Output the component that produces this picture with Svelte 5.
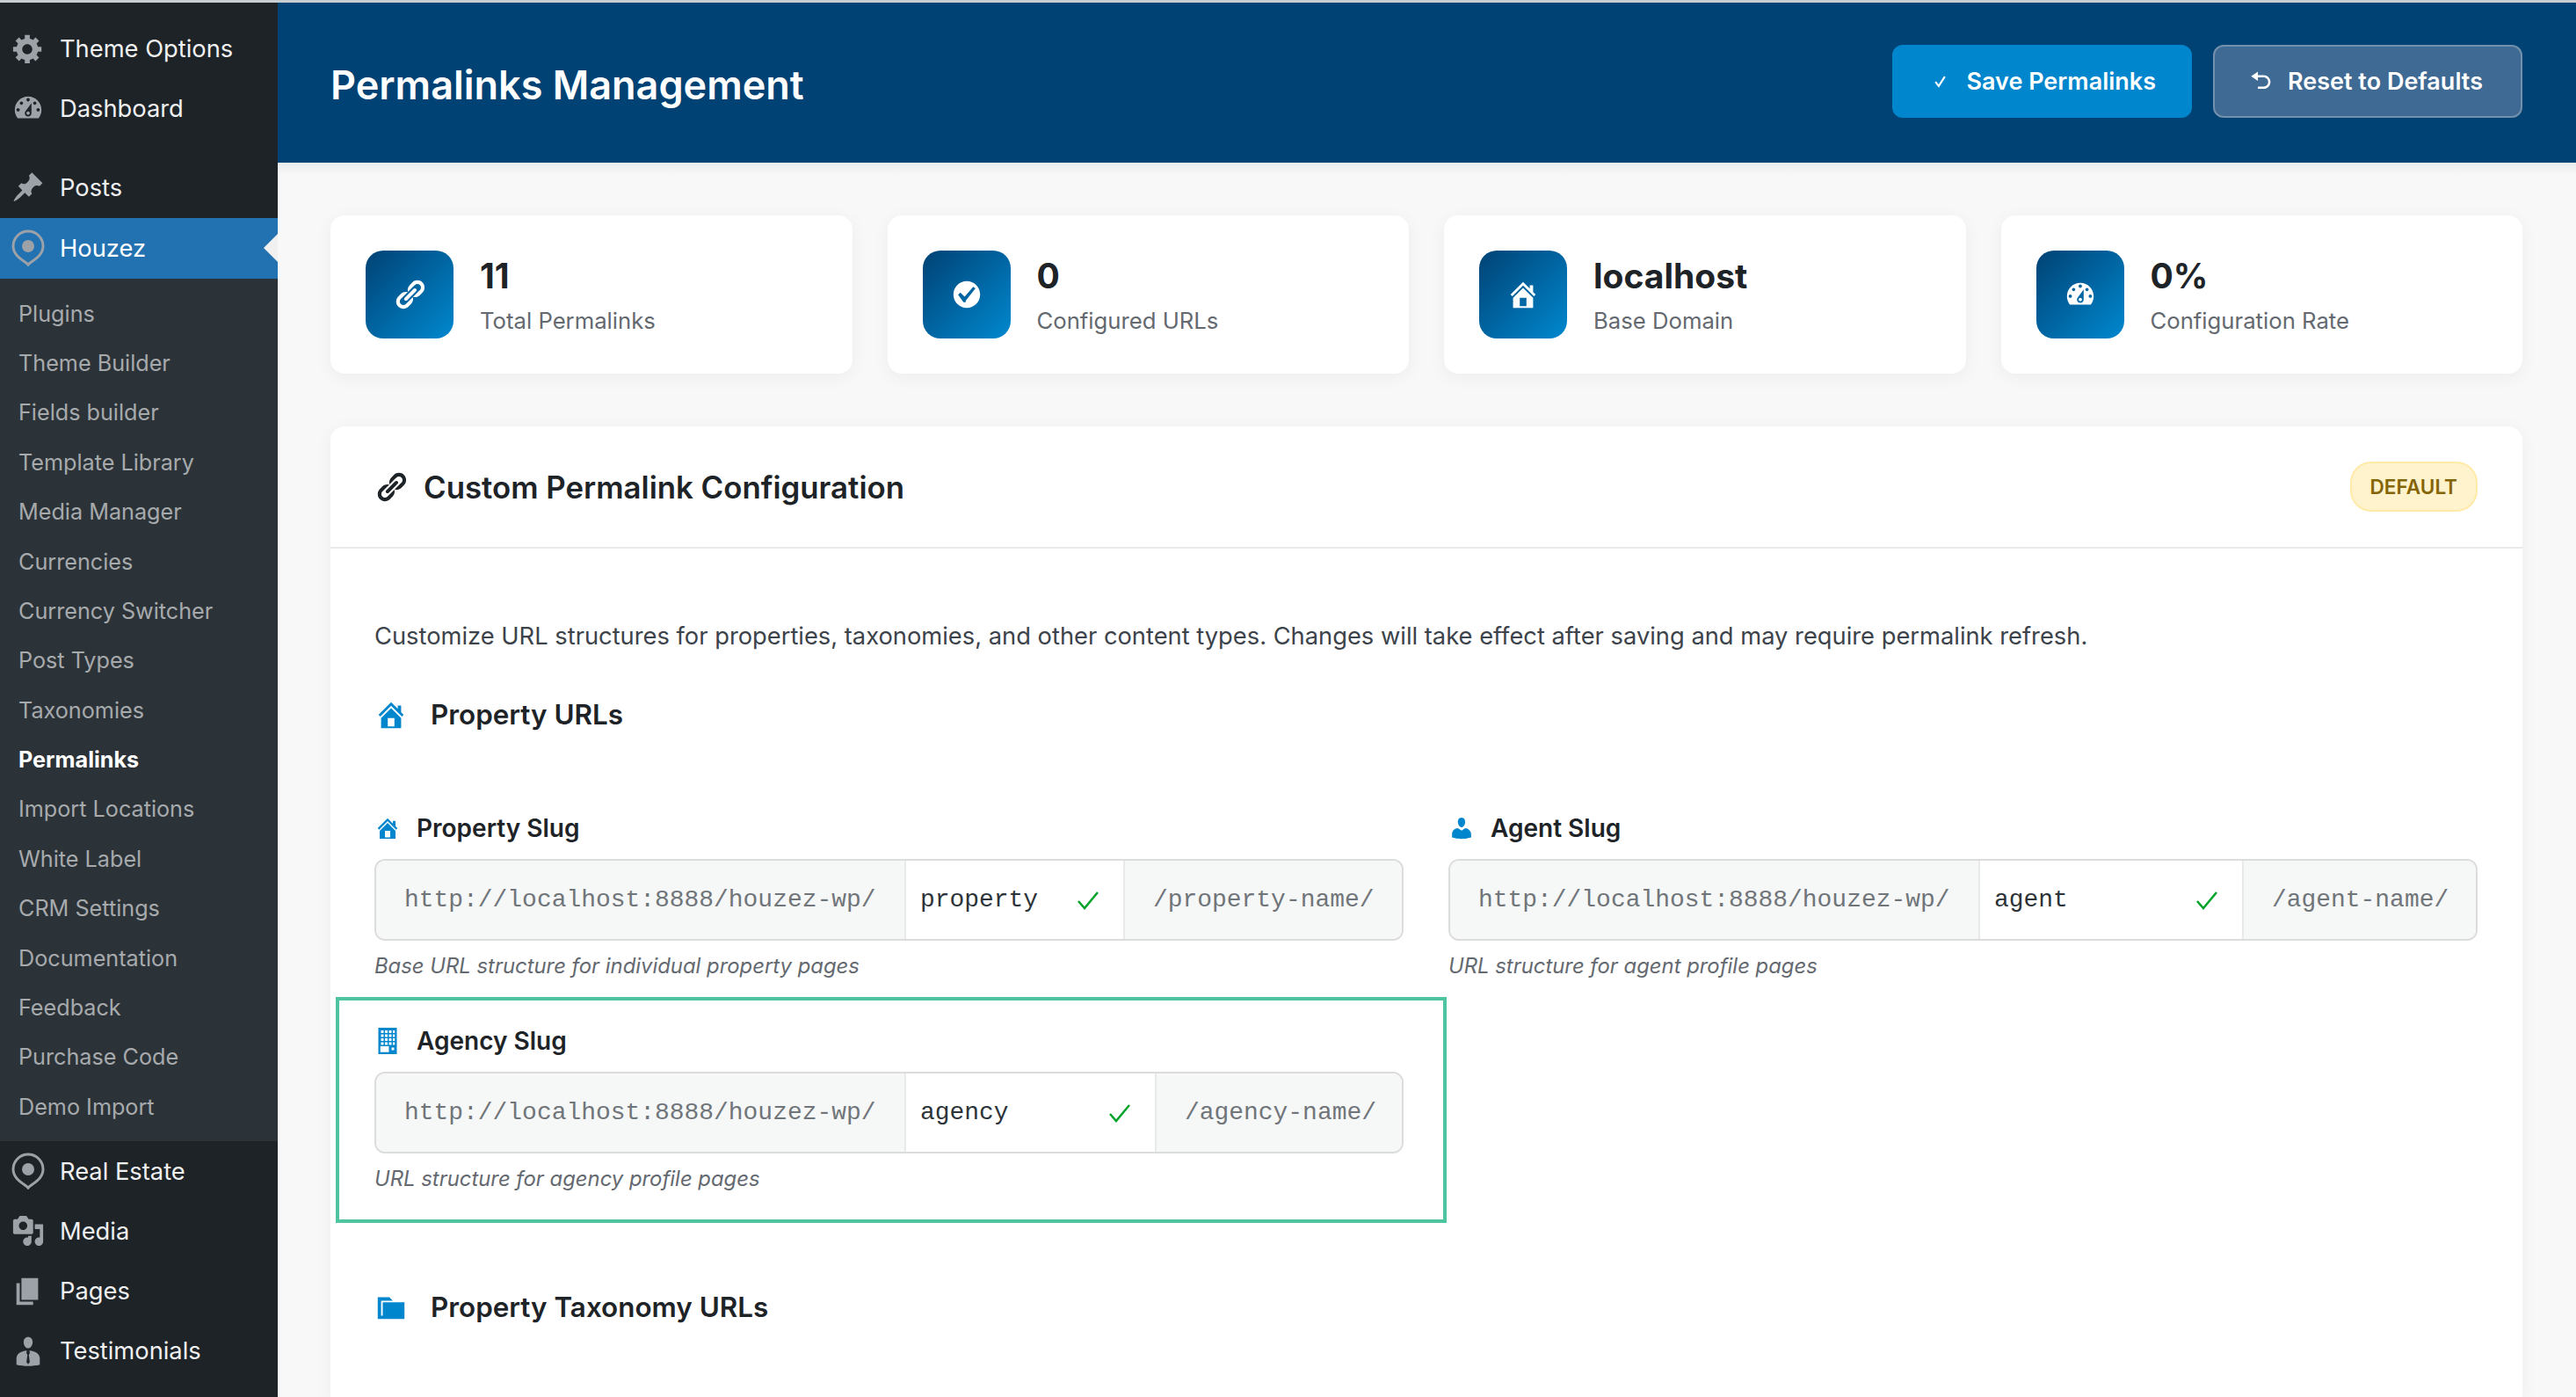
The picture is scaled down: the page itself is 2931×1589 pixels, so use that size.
<script>
	const topMenu = [
		{ label: 'Theme Options', icon: 'cog' },
		{ label: 'Dashboard', icon: 'gauge' }
	];
	const subMenu = [
		'Plugins',
		'Theme Builder',
		'Fields builder',
		'Template Library',
		'Media Manager',
		'Currencies',
		'Currency Switcher',
		'Post Types',
		'Taxonomies',
		'Permalinks',
		'Import Locations',
		'White Label',
		'CRM Settings',
		'Documentation',
		'Feedback',
		'Purchase Code',
		'Demo Import'
	];
	const lowerMenu = [
		{ label: 'Real Estate', icon: 'pin' },
		{ label: 'Media', icon: 'media' },
		{ label: 'Pages', icon: 'pages' },
		{ label: 'Testimonials', icon: 'tie' }
	];
	const stats = [
		{ value: '11', label: 'Total Permalinks', icon: 'link' },
		{ value: '0', label: 'Configured URLs', icon: 'yes' },
		{ value: 'localhost', label: 'Base Domain', icon: 'home' },
		{ value: '0%', label: 'Configuration Rate', icon: 'gauge' }
	];
	const fields = [
		{ label: 'Property Slug', icon: 'home', slug: 'property', suffix: '/property-name/', help: 'Base URL structure for individual property pages', inputWidth: 247 },
		{ label: 'Agent Slug', icon: 'user', slug: 'agent', suffix: '/agent-name/', help: 'URL structure for agent profile pages', inputWidth: 298 },
		{ label: 'Agency Slug', icon: 'building', slug: 'agency', suffix: '/agency-name/', help: 'URL structure for agency profile pages', inputWidth: 283, focused: true }
	];

	const paths = {
		cog: 'M18 12h-2.18c-.17.7-.44 1.35-.81 1.93l1.54 1.54-2.1 2.1-1.54-1.54c-.58.36-1.23.63-1.91.79V19H8v-2.18c-.68-.16-1.33-.43-1.91-.79l-1.54 1.54-2.12-2.12 1.54-1.54c-.36-.58-.63-1.23-.79-1.91H1V9.03h2.17c.16-.7.44-1.35.8-1.94L2.43 5.55l2.1-2.1 1.54 1.54c.58-.37 1.24-.64 1.93-.81V2h3v2.18c.68.16 1.33.43 1.91.79l1.54-1.54 2.12 2.12-1.54 1.54c.36.59.64 1.24.8 1.94H18V12zm-8.5 1.5c1.66 0 3-1.34 3-3s-1.34-3-3-3-3 1.34-3 3 1.34 3 3 3z',
		gauge: 'M3.76 16h12.48c1.1-1.37 1.76-3.11 1.76-5 0-4.42-3.58-8-8-8s-8 3.58-8 8c0 1.89.66 3.63 1.76 5zM10 4c.55 0 1 .45 1 1s-.45 1-1 1-1-.45-1-1 .45-1 1-1zM6 6c.55 0 1 .45 1 1s-.45 1-1 1-1-.45-1-1 .45-1 1-1zm8 0c.55 0 1 .45 1 1s-.45 1-1 1-1-.45-1-1 .45-1 1-1zm-5.37 5.55L12 7v6c0 1.1-.9 2-2 2s-2-.9-2-2c0-.57.24-1.08.63-1.45zM4 10c.55 0 1 .45 1 1s-.45 1-1 1-1-.45-1-1 .45-1 1-1zm12 0c.55 0 1 .45 1 1s-.45 1-1 1-1-.45-1-1 .45-1 1-1zm-5 3c0-.55-.45-1-1-1s-1 .45-1 1 .45 1 1 1 1-.45 1-1z',
		post: 'M10.44 3.02l1.82-1.82 6.36 6.35-1.83 1.82c-1.05-.68-2.48-.57-3.41.36l-.75.75c-.92.93-1.04 2.35-.35 3.41l-1.83 1.82-2.41-2.41-2.8 2.79c-.42.42-3.38 2.71-3.8 2.29s1.86-3.39 2.28-3.81l2.79-2.79L4.1 9.36l1.83-1.82c1.05.69 2.48.57 3.4-.36l.75-.75c.93-.92 1.05-2.35.36-3.41z',
		media: 'M13 11V4c0-.55-.45-1-1-1h-1.67L9 1H5L3.67 3H2c-.55 0-1 .45-1 1v7c0 .55.45 1 1 1h10c.55 0 1-.45 1-1zM7 4.5c1.38 0 2.5 1.12 2.5 2.5S8.38 9.5 7 9.5 4.5 8.38 4.5 7 5.62 4.5 7 4.5zM14 6h5v10.5c0 1.38-1.12 2.5-2.5 2.5S14 17.88 14 16.5s1.12-2.5 2.5-2.5c.17 0 .34.02.5.05V9h-3V6zm-4 8.05V13h2v3.5c0 1.38-1.12 2.5-2.5 2.5S7 17.88 7 16.5 8.12 14 9.5 14c.17 0 .34.02.5.05z',
		pages: 'M6 15V2h10v13H6zm-1 1h8v2H3V5h2v11z',
		tie: 'M10 1.5c-1.6 0-2.7 1.3-2.7 3 0 1.9 1.1 3.7 2.7 3.7s2.7-1.8 2.7-3.7c0-1.7-1.1-3-2.7-3zM9.2 9.6C5.4 9.9 3 11.6 3 14.4V18c1.9.5 4.4.8 7 .8s5.100-.3 7-.8v-3.600c0-2.800-2.400-4.500-6.200-4.800l.2 1.400-.6 1.200.6 4.300-1 1.200-1-1.200.6-4.300-.6-1.200z',
		link: 'M17.74 2.76c1.68 1.69 1.68 4.41 0 6.1l-1.53 1.52c-1.12 1.12-2.7 1.47-4.14 1.09l2.62-2.61.76-.77.76-.76c.84-.84.84-2.2 0-3.04-.84-.85-2.2-.85-3.04 0l-.77.76-3.38 3.38c-.37-1.44-.02-3.02 1.1-4.14l1.52-1.53c1.69-1.68 4.42-1.68 6.1 0zM8.59 13.43l5.34-5.34c.42-.42.42-1.1 0-1.52-.44-.43-1.13-.39-1.53 0l-5.33 5.34c-.42.42-.42 1.1 0 1.52.44.43 1.13.39 1.52 0zm-.76 2.29l4.14-4.15c.38 1.44.03 3.02-1.09 4.14l-1.52 1.53c-1.69 1.68-4.41 1.68-6.1 0-1.68-1.68-1.68-4.42 0-6.1l1.53-1.52c1.12-1.12 2.7-1.47 4.14-1.1l-4.14 4.15c-.85.84-.85 2.2 0 3.05.84.84 2.2.84 3.04 0z',
		yes: 'M10 2c-4.42 0-8 3.58-8 8s3.58 8 8 8 8-3.58 8-8-3.58-8-8-8zm-.615 12.66h-1.34l-3.24-4.54 1.34-1.25 2.57 2.4 5.14-5.93 1.34.94-5.81 7.38z',
		home: 'M16 8.5l1.53 1.53-1.06 1.06L10 4.62l-6.47 6.47-1.06-1.06L10 2.5l4 4v-2h2v4zm-6-2.46l6 5.99V18H4v-5.97zM12 17v-5H8v5h4z',
		user: 'M10 9.25c-2.27 0-2.73-3.44-2.73-3.44C7 4.02 7.82 2 9.97 2c2.16 0 2.98 2.02 2.71 3.81 0 0-.41 3.44-2.68 3.44zm0 2.57L12.72 10c2.39 0 4.52 2.33 4.52 4.53v2.49s-3.65 1.13-7.24 1.13c-3.65 0-7.24-1.13-7.24-1.13v-2.49c0-2.25 1.94-4.48 4.47-4.48z',
		building: 'M3 20V0h14v20zM5 2v2h2V2zm3 0v2h2V2zm3 0v2h2V2zm3 0v2h1.500V2zM5 5v2h2V5zm3 0v2h2V5zm3 0v2h2V5zm3 0v2h1.500V5zM5 8v2h2V8zm3 0v2h2V8zm3 0v2h2V8zm3 0v2h1.500V8zM5 11v2h2v-2zm3 0v2h2v-2zm3 0v2h2v-2zm3 0v2h1.500v-2zM4.500 14v4.500H11V14zM13 15v2h2v-2z',
		folder: 'M5 7h13v10H2V4h7l2 2H4v9h1V7z',
		undo: 'M12 5H7V2L1 6l6 4V7h5c2.2 0 4 1.8 4 4s-1.800 4-4 4H7v2h5c3.300 0 6-2.700 6-6s-2.700-6-6-6z'
	};
</script>

{#snippet icon(name)}
	{#if name === 'pin'}
		<svg class="pin" viewBox="0 0 38 42" aria-hidden="true">
			<path d="M19 40 C16 36 2 31 2 19 a17 17 0 0 1 34 0 C36 31 22 36 19 40z" fill="none" stroke="currentColor" stroke-width="3" />
			<circle cx="19" cy="19" r="7" fill="currentColor" />
		</svg>
	{:else}
		<svg viewBox="0 0 20 20" aria-hidden="true">
			<path d={paths[name]} fill="currentColor" fill-rule={name === 'building' || name === 'tie' ? 'evenodd' : 'nonzero'} />
		</svg>
	{/if}
{/snippet}

<div class="page">
	<aside class="sidebar">
		<nav class="menu top">
			{#each topMenu as item}
				<div class="menu-item"><span class="menu-icon">{@render icon(item.icon)}</span>{item.label}</div>
			{/each}
		</nav>
		<nav class="menu posts">
			<div class="menu-item"><span class="menu-icon">{@render icon('post')}</span>Posts</div>
			<div class="menu-item active"><span class="menu-icon">{@render icon('pin')}</span>Houzez</div>
		</nav>
		<ul class="submenu">
			{#each subMenu as item}
				<li class:current={item === 'Permalinks'}>{item}</li>
			{/each}
		</ul>
		<nav class="menu">
			{#each lowerMenu as item}
				<div class="menu-item"><span class="menu-icon">{@render icon(item.icon)}</span>{item.label}</div>
			{/each}
		</nav>
	</aside>

	<main class="main">
		<header class="topbar">
			<h1>Permalinks Management</h1>
			<div class="actions">
				<button class="btn primary">
					<svg class="tick" viewBox="0 0 14 14" aria-hidden="true"><path d="M2 7.500 5.500 12 12 2" fill="none" stroke="currentColor" stroke-width="2" /></svg>
					Save Permalinks
				</button>
				<button class="btn secondary">
					<span class="undo">{@render icon('undo')}</span>
					Reset to Defaults
				</button>
			</div>
		</header>

		<div class="content">
			<section class="stats">
				{#each stats as stat}
					<div class="stat-card">
						<div class="stat-icon">{@render icon(stat.icon)}</div>
						<div class="stat-text">
							<div class="stat-value">{stat.value}</div>
							<div class="stat-label">{stat.label}</div>
						</div>
					</div>
				{/each}
			</section>

			<section class="config">
				<div class="config-head">
					<h2><span class="head-icon">{@render icon('link')}</span>Custom Permalink Configuration</h2>
					<span class="badge">DEFAULT</span>
				</div>
				<div class="config-body">
					<p class="intro">Customize URL structures for properties, taxonomies, and other content types. Changes will take effect after saving and may require permalink refresh.</p>
					<h3><span class="section-icon">{@render icon('home')}</span>Property URLs</h3>
					<div class="fields">
						{#each fields as field}
							<div class="field" class:focused={field.focused}>
								<div class="field-label"><span class="label-icon">{@render icon(field.icon)}</span>{field.label}</div>
								<div class="input-group">
									<span class="prefix">http://localhost:8888/houzez-wp/</span>
									<span class="slug" style="width: {field.inputWidth}px">
										{field.slug}
										<svg class="ok" viewBox="0 0 24 24" aria-hidden="true"><path d="M1 13 8 21 23 3" fill="none" stroke="currentColor" stroke-width="2.500" /></svg>
									</span>
									<span class="suffix">{field.suffix}</span>
								</div>
								<div class="help">{field.help}</div>
							</div>
						{/each}
					</div>
					<h3 class="taxonomy"><span class="section-icon">{@render icon('folder')}</span>Property Taxonomy URLs</h3>
				</div>
			</section>
		</div>
	</main>
</div>

<style>
	:global(body) {
		margin: 0;
		background: #f8f8f8;
	}

	.page {
		display: flex;
		height: 1589px;
		overflow: hidden;
		border-top: 3px solid #c9ced2;
		box-sizing: border-box;
		font-family: Inter, 'Liberation Sans', sans-serif;
		background: #f8f8f8;
	}

	.sidebar {
		flex: 0 0 316px;
		background: #1d2327;
		color: #f0f0f1;
		padding-top: 18px;
		box-sizing: border-box;
	}

	.menu-item {
		display: flex;
		align-items: center;
		position: relative;
		height: 68.2px;
		font-size: 27.3px;
		color: #f0f0f1;
	}

	.menu-icon {
		flex: 0 0 68px;
		display: flex;
		justify-content: center;
		padding-right: 4px;
		box-sizing: border-box;
		color: #9ca2a7;
	}

	.menu-icon :global(svg) {
		width: 38px;
		height: 38px;
	}

	.menu-icon :global(svg.pin) {
		width: 38px;
		height: 42px;
	}

	.posts {
		margin-top: 22px;
	}

	.active {
		height: 69px;
		background: #2271b1;
		color: #fff;
	}

	.active::after {
		content: '';
		position: absolute;
		right: 0;
		top: 50%;
		margin-top: -16px;
		border: 16px solid transparent;
		border-right-color: #f0f0f1;
		border-left-width: 0;
	}

	.submenu {
		list-style: none;
		margin: 0;
		padding: 12px 0 11px;
		background: #2c3338;
	}

	.submenu li {
		height: 56.4px;
		line-height: 56.4px;
		padding-left: 21px;
		font-size: 25.2px;
		color: #a7aaad;
	}

	.submenu li.current {
		color: #fff;
		font-weight: 700;
	}

	.main {
		flex: 1;
		min-width: 0;
		display: flex;
		flex-direction: column;
	}

	.topbar {
		display: flex;
		align-items: center;
		justify-content: space-between;
		flex: 0 0 182px;
		padding: 0 61px 0 60px;
		background: #004274;
	}

	h1 {
		margin: 5px 0 0;
		font-size: 45px;
		font-weight: 600;
		color: #fff;
	}

	.actions {
		display: flex;
		gap: 24px;
		margin-bottom: 4px;
	}

	.btn {
		display: flex;
		align-items: center;
		gap: 16px;
		height: 83px;
		padding: 0 39px 0 40px;
		border: 2px solid transparent;
		border-radius: 12px;
		color: #fff;
		font: 600 27px Inter, 'Liberation Sans', sans-serif;
		box-sizing: border-box;
	}

	.primary {
		background: #0086cd;
		border-color: #0086cd;
	}

	.secondary {
		gap: 17px;
		padding: 0 43px 0 40px;
		background: #3f6a94;
		border-color: #7390ad;
	}

	.tick {
		width: 15px;
		height: 15px;
		margin: 0 6px 0 5px;
	}

	.undo {
		display: flex;
	}

	.undo :global(svg) {
		width: 26px;
		height: 26px;
	}

	.content {
		flex: 1;
		display: flex;
		flex-direction: column;
		padding: 60px 61px 0 60px;
		background: linear-gradient(#ececec, #f8f8f8 14px);
	}

	.stats {
		display: grid;
		grid-template-columns: repeat(4, 1fr);
		gap: 40px;
	}

	.stat-card {
		display: flex;
		align-items: center;
		gap: 30px;
		height: 180px;
		padding: 0 40px;
		box-sizing: border-box;
		background: #fff;
		border-radius: 16px;
		box-shadow: 0 4px 20px rgba(0, 0, 0, 0.05);
	}

	.stat-icon {
		flex: 0 0 100px;
		height: 100px;
		display: flex;
		align-items: center;
		justify-content: center;
		border-radius: 20px;
		background: linear-gradient(135deg, #004274, #0088cf);
		color: #fff;
	}

	.stat-icon :global(svg) {
		width: 38px;
		height: 38px;
	}

	.stat-value {
		font-size: 39px;
		font-weight: 700;
		line-height: 50px;
		color: #1d2327;
	}

	.stat-label {
		margin-top: 10px;
		font-size: 25.7px;
		line-height: 32px;
		color: #646970;
	}

	.config {
		flex: 1;
		margin-top: 60px;
		background: #fff;
		border-radius: 16px 16px 0 0;
		box-shadow: 0 4px 20px rgba(0, 0, 0, 0.05);
	}

	.config-head {
		display: flex;
		align-items: center;
		justify-content: space-between;
		height: 139px;
		padding: 0 51px 0 50px;
		border-bottom: 2px solid #e8e9ea;
		box-sizing: border-box;
	}

	h2 {
		display: flex;
		align-items: center;
		gap: 18px;
		margin: 0;
		font-size: 34.8px;
		font-weight: 600;
		color: #1d2327;
	}

	.head-icon {
		display: flex;
		color: #1d2327;
	}

	.head-icon :global(svg) {
		width: 38px;
		height: 38px;
	}

	.badge {
		padding: 0 21px;
		height: 57px;
		line-height: 53px;
		box-sizing: border-box;
		background: #fff3cd;
		border: 2px solid #ffeaa7;
		border-radius: 24px;
		color: #856404;
		font-size: 22.6px;
		font-weight: 600;
	}

	.config-body {
		padding: 80px 51px 0 50px;
	}

	.intro {
		margin: 0;
		font-size: 27.3px;
		line-height: 40px;
		color: #3c434a;
	}

	h3 {
		display: flex;
		align-items: center;
		gap: 26px;
		margin: 49px 0 0;
		font-size: 31.4px;
		line-height: 40px;
		font-weight: 600;
		color: #1d2327;
	}

	.section-icon {
		display: flex;
		color: #0086cd;
	}

	.section-icon :global(svg) {
		width: 38px;
		height: 38px;
	}

	.fields {
		display: grid;
		grid-template-columns: 1fr 1fr;
		gap: 51px;
		margin-top: 91px;
	}

	.field {
		position: relative;
		min-width: 0;
	}

	.focused::after {
		content: '';
		position: absolute;
		inset: -32px -49px -34px -44px;
		border: 4px solid #4ec5a0;
	}

	.field-label {
		display: flex;
		align-items: center;
		gap: 18px;
		height: 36px;
		font-size: 28px;
		font-weight: 600;
		color: #1d2327;
	}

	.label-icon {
		display: flex;
		color: #0086cd;
	}

	.label-icon :global(svg) {
		width: 30px;
		height: 30px;
	}

	.input-group {
		display: flex;
		height: 93px;
		margin-top: 17px;
		border: 2px solid #dcdcde;
		border-radius: 12px;
		box-sizing: border-box;
		overflow: hidden;
		font-family: 'Liberation Mono', monospace;
		font-size: 27.95px;
	}

	.prefix,
	.suffix {
		display: flex;
		align-items: center;
		background: #f6f7f7;
		color: #70757a;
		white-space: nowrap;
	}

	.prefix {
		flex: 0 0 603px;
		padding-left: 32px;
		box-sizing: border-box;
		border-right: 2px solid #e8e9ea;
	}

	.slug {
		position: relative;
		display: flex;
		align-items: center;
		padding-left: 16px;
		box-sizing: border-box;
		background: #fff;
		color: #2c3338;
	}

	.ok {
		position: absolute;
		right: 28px;
		top: 50%;
		width: 24px;
		height: 24px;
		margin-top: -12px;
		color: #00a32a;
	}

	.suffix {
		flex: 1;
		padding-left: 32px;
		border-left: 2px solid #e8e9ea;
	}

	.help {
		margin-top: 13px;
		font-size: 23.85px;
		line-height: 32px;
		font-style: italic;
		color: #646970;
	}

	.taxonomy {
		margin-top: 110px;
	}
</style>
